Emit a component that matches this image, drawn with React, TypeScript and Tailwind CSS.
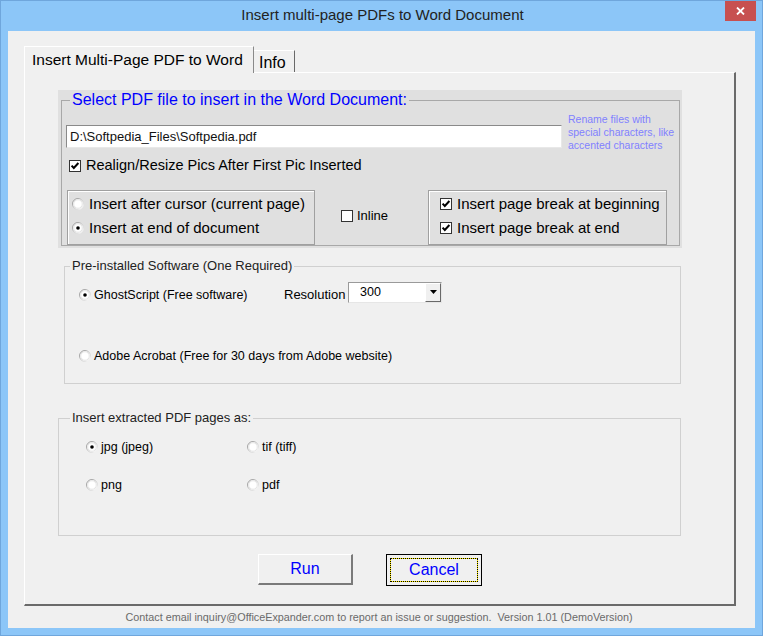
import React from "react";

const Check = ({ checked = false }: { checked?: boolean }) => (
  <svg width="12" height="12" viewBox="0 0 12 12" className="shrink-0">
    <rect x="0.5" y="0.5" width="11" height="11" fill="#fff" stroke="#333" />
    {checked && (
      <path d="M2.6 5.6 L4.8 8 L9.4 3" fill="none" stroke="#000" strokeWidth="2" />
    )}
  </svg>
);

const Radio = ({ on = false }: { on?: boolean }) => (
  <svg width="12" height="12" viewBox="0 0 12 12" className="shrink-0">
    <defs>
      <linearGradient id="rad" x1="0" y1="0" x2="1" y2="1">
        <stop offset="0" stopColor="#8a8a8a" />
        <stop offset="1" stopColor="#ffffff" />
      </linearGradient>
    </defs>
    <circle cx="6" cy="6" r="5.5" fill="#fff" stroke="url(#rad)" />
    <circle cx="6" cy="6" r="4.3" fill="none" stroke="#e4e4e4" />
    {on && <circle cx="6" cy="6" r="1.8" fill="#000" />}
  </svg>
);

const Opt = ({ on, label, className = "" }: { on?: boolean; label: string; className?: string }) => (
  <div className={"flex items-center gap-[3px] whitespace-nowrap " + className}>
    <Radio on={on} />
    <span>{label}</span>
  </div>
);

export default function App() {
  return (
    <div className="w-[763px] h-[636px] bg-[#8cc6f8] border border-[#6fa6dc] flex flex-col font-['Liberation_Sans',Arial,sans-serif] text-black">
      {/* title bar */}
      <div className="h-[30px] grid grid-cols-[1fr_auto_1fr]">
        <div />
        <div className="text-[15px] text-[#222] leading-[28px] pl-[2px] whitespace-nowrap">Insert multi-page PDFs to Word Document</div>
        <div className="flex justify-end pr-[6px]">
          <div className="w-[31px] h-[20px] bg-[#c75050] flex items-center justify-center">
            <svg width="9" height="8" viewBox="0 0 9 8">
              <path d="M1 0.5 L8 7.5 M8 0.5 L1 7.5" stroke="#fff" strokeWidth="1.8" />
            </svg>
          </div>
        </div>
      </div>

      {/* client */}
      <div className="mx-[7px] mb-[7px] flex-1 bg-[#f0f0f0] flex flex-col">
        {/* tabs */}
        <div className="mt-[15px] pl-[16px] flex items-end h-[27px]">
          <div className="relative z-10 h-[27px] w-[230px] bg-[#f0f0f0] border-l border-t border-white border-r border-r-[#8a8a8a] pl-[7px] text-[15.5px] leading-[25px] whitespace-nowrap">
            Insert Multi-Page PDF to Word
          </div>
          <div className="h-[22px] w-[41px] border-t border-white border-r border-r-[#696969] pl-[5px] text-[16px] leading-[23px] mb-[1px]">
            Info
          </div>
        </div>

        {/* tab page */}
        <div className="-mt-[1px] ml-[16px] w-[712px] h-[534px] border-l border-t border-white border-r-2 border-b-2 border-r-[#6a6a6a] border-b-[#6a6a6a] pl-[33px] pt-[17px] flex flex-col">
          {/* frame 1 */}
          <div className="w-[624px] h-[158px] bg-[#e0e0e0] pl-[3px] pr-[2px] pb-[2px] flex">
            <fieldset className="flex-1 border border-[#a8a8a8]">
              <legend className="ml-[8px] px-[2px] text-[16px] leading-[20px] text-[#0000ff] whitespace-nowrap">
                Select PDF file to insert in the Word Document:
              </legend>
              <div className="flex items-start pl-[4px]">
                <div className="mt-[15px] w-[496px] h-[23px] bg-white border border-[#8a8a8a] border-b-[#e8e8e8] border-r-[#e8e8e8] pl-[3px] text-[13px] leading-[21px] text-[#111]">
                  D:\Softpedia_Files\Softpedia.pdf
                </div>
                <div className="ml-[6px] mt-[3px] text-[10.5px] leading-[13px] text-[#8080ff] whitespace-nowrap">
                  Rename files with
                  <br />
                  special characters, like
                  <br />
                  accented characters
                </div>
              </div>
              <div className="mt-[5px] h-[18px] pl-[7px] flex items-center gap-[5px] text-[14.5px] whitespace-nowrap">
                <Check checked />
                <span>Realign/Resize Pics After First Pic Inserted</span>
              </div>
              <div className="mt-[15px] pl-[5px] flex h-[55px]">
                <div className="w-[248px] border border-[#a0a0a0] shadow-[inset_1px_1px_0_#fff] pl-[4px] pt-[1px] text-[15px]">
                  <Opt label="Insert after cursor (current page)" className="h-[24px] gap-[5px]" />
                  <Opt on label="Insert at end of document" className="h-[24px] gap-[5px]" />
                </div>
                <div className="w-[113px] pl-[26px] flex items-center gap-[4px] text-[13px] pb-[4px]">
                  <Check />
                  <span>Inline</span>
                </div>
                <div className="w-[239px] border border-[#a0a0a0] shadow-[inset_1px_1px_0_#fff] pl-[11px] pt-[1px] text-[15px] whitespace-nowrap">
                  <div className="h-[24px] flex items-center gap-[5px]">
                    <Check checked />
                    <span>Insert page break at beginning</span>
                  </div>
                  <div className="h-[24px] flex items-center gap-[5px]">
                    <Check checked />
                    <span>Insert page break at end</span>
                  </div>
                </div>
              </div>
            </fieldset>
          </div>

          {/* frame 2 */}
          <fieldset className="mt-[10px] ml-[6px] w-[617px] h-[126px] border border-[#d0d0d0] text-[12.5px]">
            <legend className="ml-[5px] px-[2px] text-[13px] leading-[16px] text-[#222]">Pre-installed Software (One Required)</legend>
            <div className="mt-[10px] pl-[14px] h-[22px] flex items-center">
              <Opt on label="GhostScript (Free software)" className="w-[205px]" />
              <span className="w-[64px] text-[13px]">Resolution</span>
              <div className="mb-[6px] w-[94px] h-[21px] bg-white border border-[#9a9a9a] border-r-[#e6e6e6] border-b-[#e6e6e6] flex">
                <span className="flex-1 pl-[11px] text-[12.5px] leading-[19px]">300</span>
                <div className="w-[16px] h-[19px] bg-[#f0f0f0] border border-white border-r-[#696969] border-b-[#696969] flex items-center justify-center">
                  <svg width="7" height="4" viewBox="0 0 7 4">
                    <path d="M0 0 H7 L3.5 4 Z" fill="#000" />
                  </svg>
                </div>
              </div>
            </div>
            <div className="mt-[39px] pl-[14px] h-[22px] flex items-center">
              <Opt label="Adobe Acrobat (Free for 30 days from Adobe website)" />
            </div>
          </fieldset>

          {/* frame 3 */}
          <fieldset className="mt-[26px] w-[623px] h-[126px] border border-[#d0d0d0] text-[12.5px]">
            <legend className="ml-[11px] px-[2px] text-[13px] leading-[16px] text-[#222]">Insert extracted PDF pages as:</legend>
            <div className="mt-[10px] pl-[27px] h-[22px] flex items-center">
              <Opt on label="jpg (jpeg)" className="w-[161px]" />
              <Opt label="tif (tiff)" />
            </div>
            <div className="mt-[16px] pl-[27px] h-[22px] flex items-center">
              <Opt label="png" className="w-[161px]" />
              <Opt label="pdf" />
            </div>
          </fieldset>

          {/* buttons */}
          <div className="mt-[18px] ml-[200px] flex gap-[33px] items-start">
            <button className="w-[95px] h-[31px] bg-[#f0f0f0] border border-white border-r-2 border-b-2 border-r-[#7a7a7a] border-b-[#7a7a7a] text-[16px] text-[#0000ff]">
              Run
            </button>
            <button className="w-[96px] h-[32px] bg-[#f0f0f0] border border-black p-[3px] text-[16px] text-[#0000ff]">
              <div className="w-full h-full border border-[#ffee00] outline-1 outline-dotted outline-black -outline-offset-1 flex items-center justify-center">
                Cancel
              </div>
            </button>
          </div>
        </div>

        {/* footer */}
        <div className="flex-1 flex items-center justify-center pr-[5px] text-[10.8px] text-[#6a6a6a] whitespace-nowrap">
          Contact email inquiry@OfficeExpander.com to report an issue or suggestion.&nbsp; Version 1.01 (DemoVersion)
        </div>
      </div>
    </div>
  );
}
